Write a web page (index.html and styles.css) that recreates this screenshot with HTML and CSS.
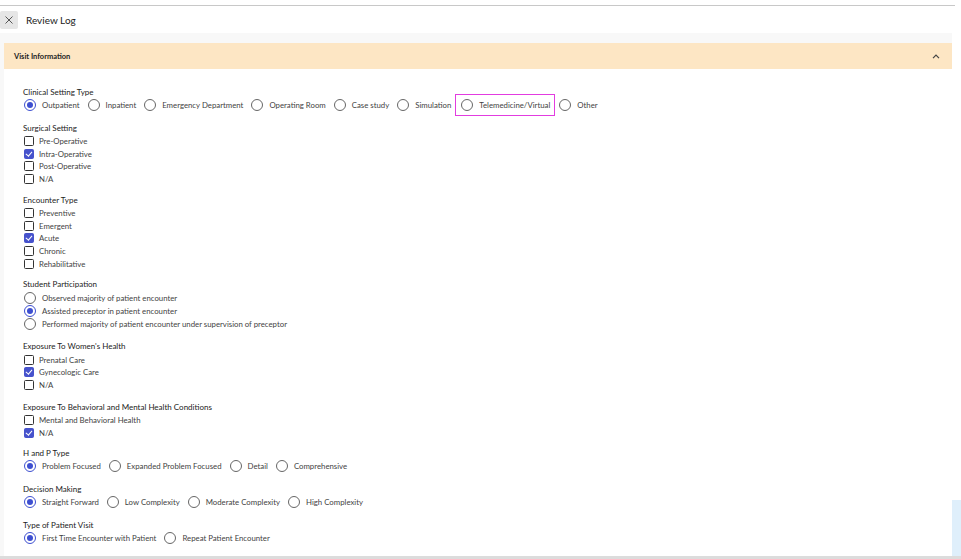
FILE: index.html
```html
<!DOCTYPE html>
<html lang="en">
<head>
  <meta charset="UTF-8" />
  <meta name="viewport" content="width=device-width, initial-scale=1" />
  <title>Review Log</title>
  <link rel="stylesheet" href="styles.css">
</head>
<body>

  <div class="topline"></div>

  <div class="titlebar">
    <button class="close-btn" aria-label="Close">
      <svg width="8" height="8" viewBox="0 0 8 8"><path d="M0.5 0.5 L7.5 7.5 M7.5 0.5 L0.5 7.5" stroke="#555" stroke-width="1" fill="none"/></svg>
    </button>
    <span class="title">Review Log</span>
  </div>

  <div class="page">
    <div class="main">
      <div class="panel">
        <div class="panel-head">
          <span>Visit Information</span>
          <svg class="chevron" width="8" height="5" viewBox="0 0 8 5"><path d="M1 4.2 L4 1.2 L7 4.2" stroke="#444" stroke-width="1.2" fill="none"/></svg>
        </div>

        <div class="panel-body">

          <!-- Clinical setting -->
          <div class="group inline">
            <div class="label">Clinical Setting Type</div>
            <div class="row">
              <span class="opt"><i class="radio on"></i>Outpatient</span>
              <span class="opt"><i class="radio"></i>Inpatient</span>
              <span class="opt"><i class="radio"></i>Emergency Department</span>
              <span class="opt"><i class="radio"></i>Operating Room</span>
              <span class="opt"><i class="radio"></i>Case study</span>
              <span class="opt"><i class="radio"></i>Simulation</span>
              <span class="opt marked"><i class="radio"></i>Telemedicine/Virtual</span>
              <span class="opt"><i class="radio"></i>Other</span>
            </div>
          </div>

          <div class="group">
            <div class="label">Surgical Setting</div>
            <div class="item"><i class="check"></i>Pre-Operative</div>
            <div class="item"><i class="check on"></i>Intra-Operative</div>
            <div class="item"><i class="check"></i>Post-Operative</div>
            <div class="item"><i class="check"></i>N/A</div>
          </div>

          <div class="group">
            <div class="label">Encounter Type</div>
            <div class="item"><i class="check"></i>Preventive</div>
            <div class="item"><i class="check"></i>Emergent</div>
            <div class="item"><i class="check on"></i>Acute</div>
            <div class="item"><i class="check"></i>Chronic</div>
            <div class="item"><i class="check"></i>Rehabilitative</div>
          </div>

          <div class="group radios">
            <div class="label">Student Participation</div>
            <div class="item"><i class="radio"></i>Observed majority of patient encounter</div>
            <div class="item"><i class="radio on"></i>Assisted preceptor in patient encounter</div>
            <div class="item"><i class="radio"></i>Performed majority of patient encounter under supervision of preceptor</div>
          </div>

          <div class="group wide">
            <div class="label">Exposure To Women's Health</div>
            <div class="item"><i class="check"></i>Prenatal Care</div>
            <div class="item"><i class="check on"></i>Gynecologic Care</div>
            <div class="item"><i class="check"></i>N/A</div>
          </div>

          <div class="group">
            <div class="label">Exposure To Behavioral and Mental Health Conditions</div>
            <div class="item"><i class="check"></i>Mental and Behavioral Health</div>
            <div class="item"><i class="check on"></i>N/A</div>
          </div>

          <div class="group inline">
            <div class="label">H and P Type</div>
            <div class="row">
              <span class="opt"><i class="radio on"></i>Problem Focused</span>
              <span class="opt"><i class="radio"></i>Expanded Problem Focused</span>
              <span class="opt"><i class="radio"></i>Detail</span>
              <span class="opt"><i class="radio"></i>Comprehensive</span>
            </div>
          </div>

          <div class="group inline">
            <div class="label">Decision Making</div>
            <div class="row">
              <span class="opt"><i class="radio on"></i>Straight Forward</span>
              <span class="opt"><i class="radio"></i>Low Complexity</span>
              <span class="opt"><i class="radio"></i>Moderate Complexity</span>
              <span class="opt"><i class="radio"></i>High Complexity</span>
            </div>
          </div>

          <div class="group inline">
            <div class="label">Type of Patient Visit</div>
            <div class="row">
              <span class="opt"><i class="radio on"></i>First Time Encounter with Patient</span>
              <span class="opt"><i class="radio"></i>Repeat Patient Encounter</span>
            </div>
          </div>

        </div>
      </div>
    </div>
    <div class="scrollbar"><div class="thumb"></div></div>
  </div>

  <div class="bottombar"></div>

</body>
</html>
```

FILE: styles.css
```css
* {
  box-sizing: border-box;
  margin: 0;
  padding: 0;
}

html, body {
  height: 100%;
  overflow: hidden;
}

body {
  font-family: Lato, sans-serif;
  background: #fff;
  color: #3f3f3f;
  font-size: 7.8px;
}

.topline {
  height: 6px;
  border-bottom: 1px solid #c8c8c8;
  width: 955px;
}

.titlebar {
  height: 27px;
  display: flex;
  align-items: center;
  gap: 8px;
}

.close-btn {
  width: 18px;
  height: 18px;
  border: none;
  border-radius: 2px;
  background: #e6e6e6;
  display: flex;
  align-items: center;
  justify-content: center;
}

.title {
  font-size: 10px;
  color: #222;
}

.page {
  display: flex;
  height: 523px;
}

.main {
  width: 952px;
  background: #f8f8f8;
  padding: 10px 0 0 4px;
}

.scrollbar {
  flex: 1;
  display: flex;
  flex-direction: column;
  justify-content: flex-end;
}

.thumb {
  height: 56px;
  background: #dfeffb;
}

.panel {
  background: #fff;
  height: 100%;
}

.panel-head {
  height: 26px;
  background: #fde6c4;
  display: flex;
  align-items: center;
  justify-content: space-between;
  padding: 0 12px 0 10px;
  font-weight: bold;
  color: #222;
  font-size: 7.5px;
}

.panel-body {
  padding: 16.5px 19px;
}

.group {
  margin-bottom: 8px;
}

.group.inline {
  margin-bottom: 11px;
}

.group.radios {
  margin-bottom: 10px;
}

.group.wide {
  margin-bottom: 9px;
}

.label {
  height: 13px;
  line-height: 13px;
  color: #222;
  font-size: 8px;
}

.item {
  height: 12.75px;
  display: flex;
  align-items: center;
  gap: 5px;
}

.radios .item {
  height: 13px;
}

.item .radio {
  margin-right: 1px;
}

.row {
  height: 12px;
  display: flex;
  align-items: center;
  gap: 7px;
}

.opt {
  display: flex;
  align-items: center;
  gap: 6px;
  height: 12px;
}

.opt.marked {
  outline: 1.5px solid #e23ce0;
  padding: 0 4px;
  margin: 0 -3px 0 -2px;
  height: 20px;
}

.radio {
  width: 12px;
  height: 12px;
  border-radius: 50%;
  border: 1px solid #666;
  flex-shrink: 0;
  position: relative;
  margin-left: 1px;
}

.radio.on {
  border-color: #3d4fd0;
}

.radio.on::after {
  content: "";
  position: absolute;
  top: 2px;
  left: 2px;
  width: 6px;
  height: 6px;
  border-radius: 50%;
  background: #3d4fd0;
}

.check {
  width: 10px;
  height: 10px;
  border: 1.5px solid #333;
  border-radius: 1.5px;
  flex-shrink: 0;
  position: relative;
  margin-left: 1px;
}

.check.on {
  background: #4652cc;
  border-color: #4652cc;
}

.check.on::after {
  content: "";
  position: absolute;
  left: 2px;
  top: 0px;
  width: 2.5px;
  height: 5px;
  border-right: 1px solid #fff;
  border-bottom: 1px solid #fff;
  transform: rotate(40deg);
}

.bottombar {
  position: fixed;
  left: 0;
  right: 0;
  bottom: 0;
  height: 3px;
  background: #dcdcdc;
}
```
